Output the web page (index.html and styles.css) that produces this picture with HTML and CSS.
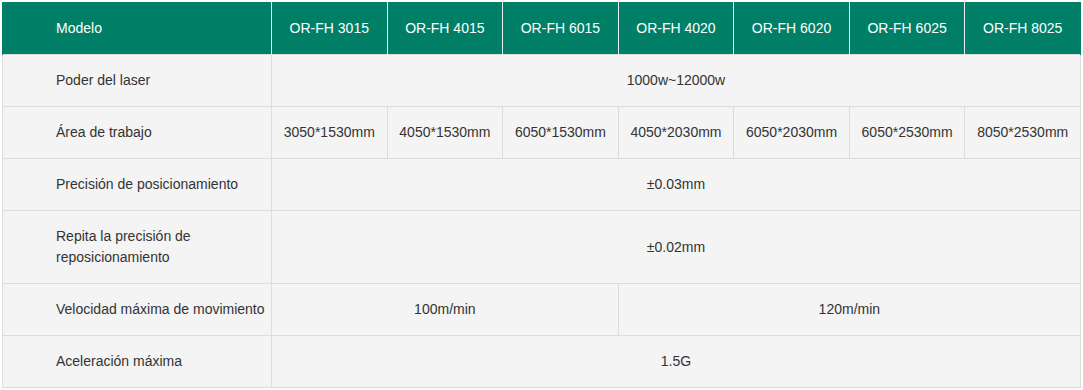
FILE: index.html
```html
<!DOCTYPE html>
<html lang="es">
<head>
<meta charset="utf-8">
<link rel="stylesheet" href="styles.css">
</head>
<body>
<div class="wrap">
<table class="spec">
  <colgroup>
    <col class="c-label">
    <col><col><col><col><col><col><col>
  </colgroup>
  <thead>
    <tr>
      <th class="label">Modelo</th>
      <th>OR-FH 3015</th>
      <th>OR-FH 4015</th>
      <th>OR-FH 6015</th>
      <th>OR-FH 4020</th>
      <th>OR-FH 6020</th>
      <th>OR-FH 6025</th>
      <th>OR-FH 8025</th>
    </tr>
  </thead>
  <tbody>
    <tr>
      <td class="label">Poder del laser</td>
      <td colspan="7">1000w~12000w</td>
    </tr>
    <tr>
      <td class="label">Área de trabajo</td>
      <td>3050*1530mm</td>
      <td>4050*1530mm</td>
      <td>6050*1530mm</td>
      <td>4050*2030mm</td>
      <td>6050*2030mm</td>
      <td>6050*2530mm</td>
      <td>8050*2530mm</td>
    </tr>
    <tr>
      <td class="label">Precisión de posicionamiento</td>
      <td colspan="7">±0.03mm</td>
    </tr>
    <tr>
      <td class="label">Repita la precisión de reposicionamiento</td>
      <td colspan="7">±0.02mm</td>
    </tr>
    <tr>
      <td class="label">Velocidad máxima de movimiento</td>
      <td colspan="3">100m/min</td>
      <td colspan="4">120m/min</td>
    </tr>
    <tr>
      <td class="label">Aceleración máxima</td>
      <td colspan="7">1.5G</td>
    </tr>
  </tbody>
</table>
</div>
</body>
</html>
```

FILE: styles.css
```css
html, body {
  margin: 0;
  padding: 0;
  background: #fff;
}
.wrap {
  padding: 2px 2px 0 2px;
}
.spec {
  width: 1079px;
  table-layout: fixed;
  border-collapse: collapse;
  font-family: "Liberation Sans", Arial, sans-serif;
  font-size: 14px;
  line-height: 21px;
  color: #333;
}
.spec col.c-label {
  width: 269px;
}
.spec th {
  background: #007f66;
  color: #fff;
  font-weight: normal;
  height: 52px;
  padding: 0 4px;
  border-left: 1px solid #e6f2ef;
  border-right: 1px solid #e6f2ef;
  text-align: center;
  vertical-align: middle;
}
.spec th:first-child {
  border-left: 1px solid #007f66;
}
.spec th:last-child {
  border-right: 1px solid #007f66;
}
.spec td {
  background: #f4f4f4;
  border: 1px solid #dcdcdc;
  padding: 15px 4px;
  text-align: center;
  vertical-align: middle;
}
.spec .label {
  text-align: left;
  padding-left: 53px;
  padding-right: 4px;
}
```
